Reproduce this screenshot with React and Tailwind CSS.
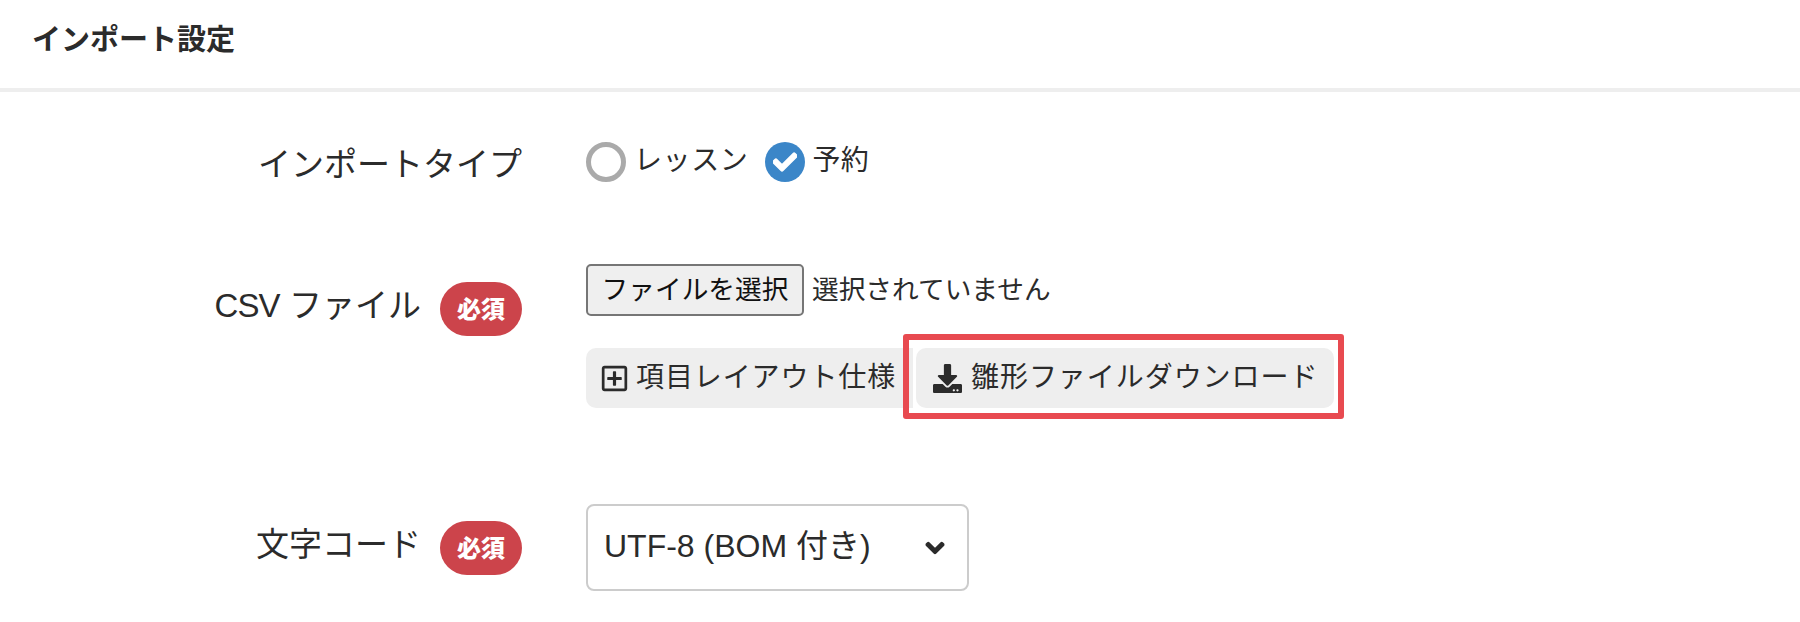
import React from "react";
import { FaRegPlusSquare, FaDownload, FaChevronDown, FaCheck } from "react-icons/fa";

function Badge() {
  return (
    <span className="flex h-[54px] w-[82px] shrink-0 items-center justify-center rounded-full bg-[#cc444b] text-[24px] font-black text-white">
      必須
    </span>
  );
}

function Label({ children, required }) {
  return (
    <div className="flex w-[522px] shrink-0 items-center justify-end gap-[19px] text-[33px] leading-[47px] text-[#2b2b2b]">
      <span className={required ? "pb-[7px]" : "pt-[2px] leading-[54px]"}>{children}</span>
      {required && <Badge />}
    </div>
  );
}

export default function App() {
  return (
    <div className="h-[622px] w-[1800px] overflow-hidden bg-white font-['Liberation_Sans','Noto_Sans_CJK_JP',sans-serif] text-[#2b2b2b]">
      <header className="flex h-[92px] items-start border-b-4 border-[#eeeeee] px-8 pt-[20px]">
        <h1 className="text-[29px] font-bold leading-[40px]">インポート設定</h1>
      </header>

      <section className="flex h-[54px] gap-16 mt-[45px]">
        <Label>インポートタイプ</Label>
        <div className="flex items-center pb-[4px] text-[28px] leading-[40px]">
          <span className="h-10 w-10 rounded-full border-[5px] border-[#aaaaaa]" />
          <span className="ml-2 pb-[3px] tracking-[0.6px]">レッスン</span>
          <span className="ml-[17px] flex h-10 w-10 items-center justify-center rounded-full bg-[#3b86c8] text-white">
            <FaCheck className="h-[24px] w-[24px]" stroke="currentColor" strokeWidth={30} />
          </span>
          <span className="ml-[7px] pb-[3px] tracking-[0.4px]">予約</span>
        </div>
      </section>

      <section className="flex gap-16 pt-[73px]">
        <div className="pt-[18px]">
          <Label required>
            <span className="tracking-[-0.8px]">CSV</span> ファイル
          </Label>
        </div>
        <div className="flex flex-col">
          <div className="flex items-center gap-2 text-[26.7px]">
            <button className="h-[52px] w-[218px] rounded-[5px] border-2 border-[#767676] bg-[#efefef] text-[26.7px] text-[#111111]">
              ファイルを選択
            </button>
            <span>選択されていません</span>
          </div>
          <div className="mt-8 flex text-[28px]">
            <div className="flex h-[60px] w-[327px] items-center gap-[7px] rounded-l-[10px] bg-[#eeeeee] pl-[14px] tracking-[0.9px]">
              <FaRegPlusSquare className="h-[29px] w-[29px] shrink-0" />
              <span>項目レイアウト仕様</span>
            </div>
            <div className="relative ml-[3px] flex h-[60px] w-[418px] items-center gap-[9px] rounded-[10px] bg-[#eeeeee] pl-[17px] tracking-[0.95px]">
              <FaDownload className="h-[29px] w-[29px] shrink-0" />
              <span>雛形ファイルダウンロード</span>
              <div className="absolute -bottom-[11px] -left-[13px] -right-[10px] -top-[14px] rounded-[3px] border-[6px] border-[#e84a50]" />
            </div>
          </div>
        </div>
      </section>

      <section className="flex gap-16 pt-24">
        <div className="pt-[17px]">
          <Label required>文字コード</Label>
        </div>
        <div className="flex h-[87px] w-[383px] items-center justify-between rounded-[8px] border-2 border-[#cccccc] pl-[16px] pr-[22px] text-[32px]">
          <span className="pb-[4px]">UTF-8 (BOM 付き)</span>
          <FaChevronDown className="h-[20px] w-[20px]" stroke="currentColor" strokeWidth={50} />
        </div>
      </section>
    </div>
  );
}
